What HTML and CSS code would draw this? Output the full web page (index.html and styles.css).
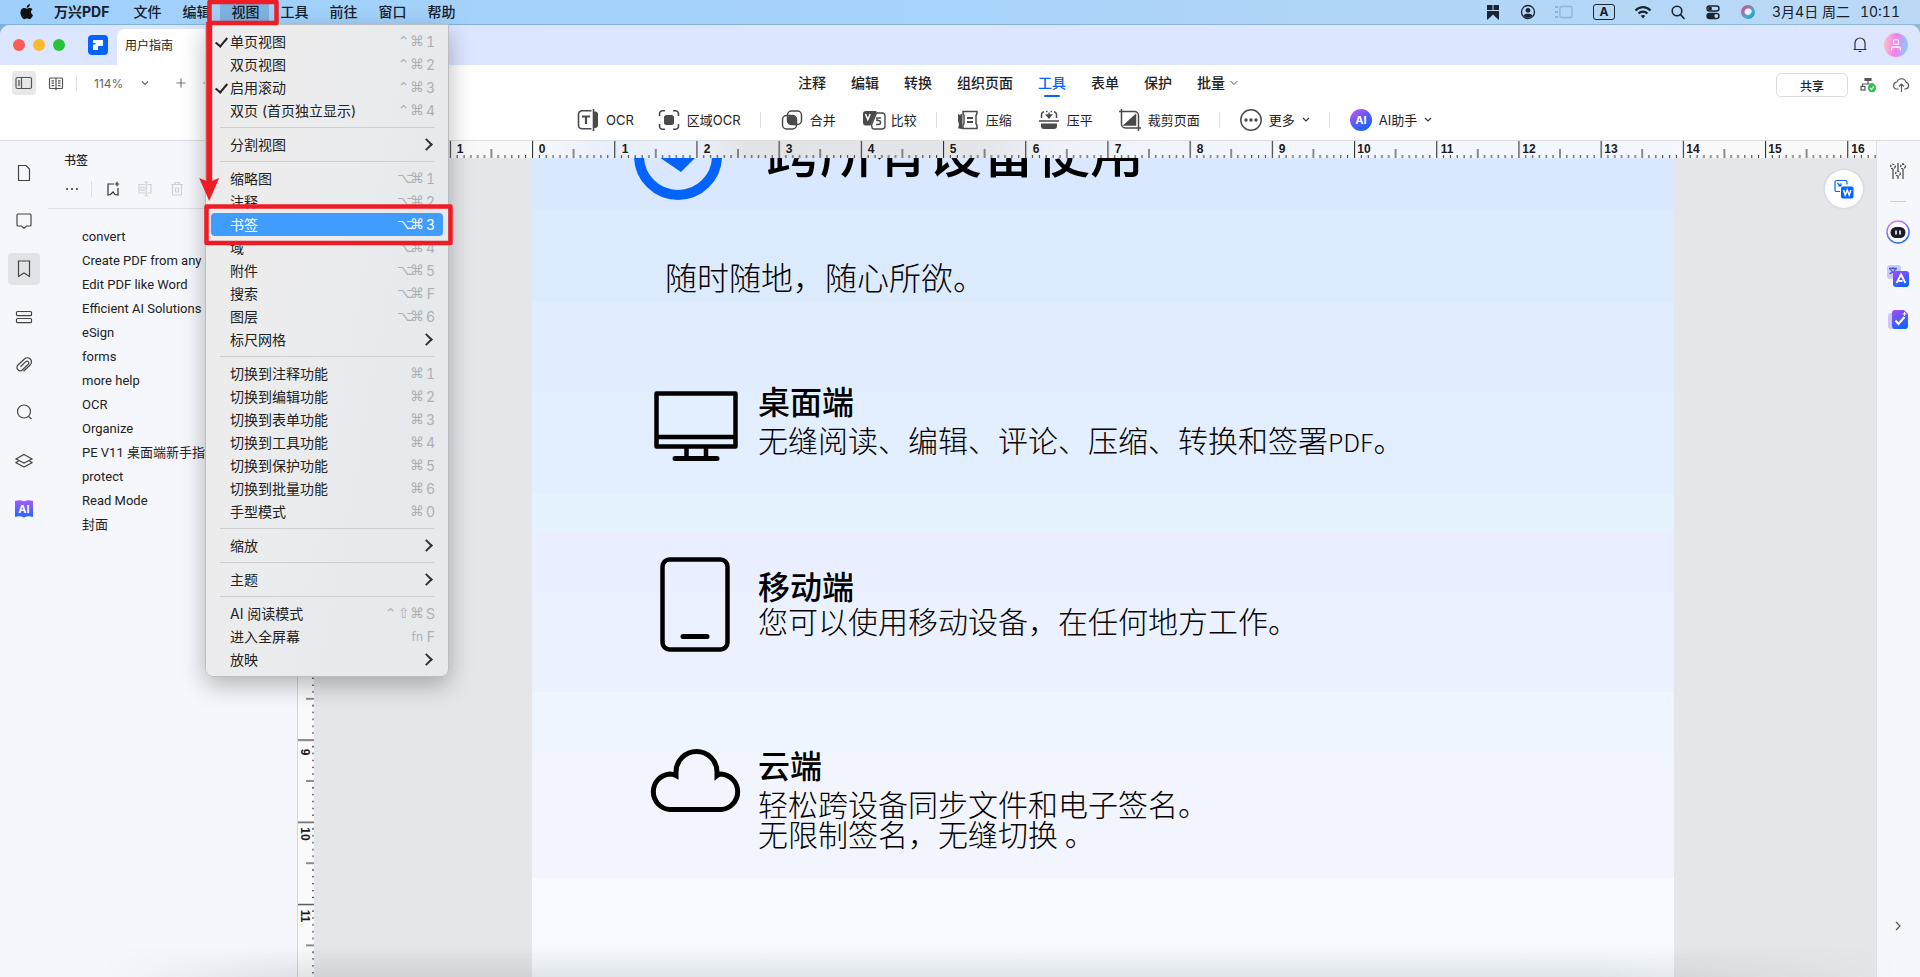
FILE: index.html
```html
<!DOCTYPE html>
<html lang="zh-CN">
<head>
<meta charset="utf-8">
<title>万兴PDF - 用户指南</title>
<link rel="stylesheet" href="styles.css">
</head>
<body>
<header class="menubar">
  <svg class="menubar__apple" width="16" height="18" viewBox="0 0 16 18" fill="#111"><path d="M10.900 1c.1 1-.3 2-.9 2.700-.6.7-1.500 1.200-2.300 1.100-.1-1 .3-1.900.9-2.500C9.200 1.600 10.200 1.100 10.900 1zM13.600 6.300c-1 .6-1.600 1.500-1.600 2.700 0 1.400.8 2.400 2 2.900-.3.900-.7 1.700-1.200 2.400-.7 1-1.300 1.900-2.400 1.900-1 0-1.300-.6-2.500-.6s-1.600.6-2.500.6c-1 0-1.800-1-2.500-2C1.500 12.100.9 9.200 1.900 7.200c.7-1.400 1.900-2.100 3.100-2.100 1.200 0 1.900.6 2.900.6.900 0 1.500-.7 2.900-.7 1.100 0 2.100.5 2.800 1.300z"/></svg>
  <nav class="menubar__items">
    <button class="menubar__item menubar__item--app">万兴PDF</button>
    <button class="menubar__item">文件</button>
    <button class="menubar__item">编辑</button>
    <button class="menubar__item menubar__item--open">视图</button>
    <button class="menubar__item">工具</button>
    <button class="menubar__item">前往</button>
    <button class="menubar__item">窗口</button>
    <button class="menubar__item">帮助</button>
  </nav>
  <div class="menubar__status">
    <svg width="22" height="18" viewBox="0 0 22 18" fill="#1c2430"><path d="M5 2h5.500v5H5zM11.500 2H17v5h-5.500zM5 8h12v9l-3.500-3L11 11.500 8.500 14 5 17z"/></svg>
    <svg width="22" height="18" viewBox="0 0 22 18"><circle cx="11" cy="9" r="6.500" fill="none" stroke="#1c2430" stroke-width="1.300"/><circle cx="11" cy="7.300" r="2.400" fill="#1c2430"/><path d="M6.500 12.500c1.500-2.500 7.500-2.500 9 0-2 3-7 3-9 0z" fill="#1c2430"/></svg>
    <svg width="22" height="18" viewBox="0 0 22 18" fill="none" stroke="#93b2cf" stroke-width="1.300"><rect x="8" y="3.500" width="12" height="11" rx="1.500"/><path d="M3 4h3M3 9h3M3 14h3" stroke-width="2"/></svg>
    <span class="menubar__input">A</span>
    <svg width="22" height="18" viewBox="0 0 22 18" fill="none" stroke="#1c2430" stroke-width="2.200"><path d="M3.500 7.500C8 3 14 3 18.500 7.500M6.500 10.500c2.500-2.500 6.500-2.500 9 0"/><path d="M11 15.500l-2.300-2.800c1.400-1 3.200-1 4.600 0z" fill="#1c2430" stroke="none"/></svg>
    <svg width="22" height="18" viewBox="0 0 22 18" fill="none" stroke="#1c2430" stroke-width="1.600"><circle cx="10" cy="8" r="4.800"/><path d="M13.600 11.600L17 15.500" stroke-linecap="round"/></svg>
    <svg width="22" height="18" viewBox="0 0 22 18"><rect x="5" y="3" width="12" height="5" rx="2.500" fill="none" stroke="#1c2430" stroke-width="1.400"/><circle cx="8" cy="5.500" r="2" fill="#1c2430"/><rect x="4.300" y="9.700" width="13.400" height="6.600" rx="3.300" fill="#1c2430"/><circle cx="14.300" cy="13" r="1.900" fill="#b9d7f4"/></svg>
    <svg width="22" height="18" viewBox="0 0 22 18"><defs><linearGradient id="siri" x1="0" y1="0" x2="1" y2="1"><stop offset="0" stop-color="#e8477d"/><stop offset=".4" stop-color="#8a7fb0"/><stop offset=".65" stop-color="#35b8c8"/><stop offset="1" stop-color="#3a62c9"/></linearGradient></defs><circle cx="11" cy="9" r="7" fill="url(#siri)"/><path d="M11 5.500c3 0 4 2 3.500 3.500S12.500 12 11 12 7.500 11 7.500 9 9 5.500 11 5.500z" fill="#fff" opacity=".85"/></svg>
    <time class="menubar__clock"><span>3月4日 周二</span><span>10:11</span></time>
  </div>
</header>

<div class="window">
  <div class="titlebar">
    <div class="lights"><button class="light light--red" aria-label="关闭"></button><button class="light light--yellow" aria-label="最小化"></button><button class="light light--green" aria-label="全屏"></button></div>
    <svg class="titlebar__logo" width="20" height="20" viewBox="0 0 20 20"><rect width="20" height="20" rx="4" fill="#0463ff"/><path d="M5 5h10v6H10v4H5V9.500h2.500V8H5z" fill="#fff"/></svg>
    <div class="tab">用户指南</div>
    <div class="titlebar__right">
      <svg width="16" height="18" viewBox="0 0 16 18" fill="none" stroke="#333" stroke-width="1.200"><path d="M1.500 13.500h13M3 13.500V7a5 5 0 0 1 10 0v6.500M6.500 15.500h3"/></svg>
      <svg width="24" height="24" viewBox="0 0 24 24"><defs><linearGradient id="av" x1="0" y1=".4" x2="1" y2=".5"><stop offset="0" stop-color="#f9c3c4"/><stop offset=".5" stop-color="#f77cf0"/><stop offset="1" stop-color="#7cd3fb"/></linearGradient></defs><circle cx="12" cy="12" r="12" fill="url(#av)"/><g fill="none" stroke="#fff" stroke-width="1.300" opacity=".9"><rect x="9.500" y="6.500" width="5" height="5" rx="2"/><path d="M7.500 17.500v-1a2.500 2.500 0 0 1 2.500-2.500h4a2.500 2.500 0 0 1 2.500 2.500v1"/></g></svg>
    </div>
  </div>

  <div class="toolbar">
    <div class="toolbar__row">
      <div class="view-tools">
        <button class="view-tools__btn view-tools__btn--on" aria-label="侧边栏"><svg width="18" height="14" viewBox="0 0 18 14" fill="none" stroke="#555" stroke-width="1.200"><rect x="1" y="1.500" width="15.500" height="11" rx="1.500"/><path d="M6.500 1.500v11"/><path d="M3 4h2v6H3z" fill="#888" stroke="none"/></svg></button>
        <button class="view-tools__btn" aria-label="双页"><svg width="16" height="14" viewBox="0 0 16 14" fill="none" stroke="#555" stroke-width="1.200"><path d="M8 2.500v10.500M8 2H2.500a1 1 0 0 0-1 1v8.500a1 1 0 0 0 1 1H7l1 .7 1-.7h4.500a1 1 0 0 0 1-1V3a1 1 0 0 0-1-1zM3.500 4.800h2.500M3.500 7.200h2.500M3.500 9.700h2.500M10 4.800h2.500M10 7.200h2.500M10 9.700h2.500"/></svg></button>
        <span class="rule"></span>
        <span class="zoom">114%</span>
        <svg width="8" height="6" viewBox="0 0 8 6" fill="none" stroke="#666" stroke-width="1.200"><path d="M1 1.500l3 3 3-3"/></svg>
        <button class="zoom-btn" aria-label="放大"><svg width="10" height="10" viewBox="0 0 10 10" stroke="#777" stroke-width="1.200"><path d="M5 .500v9M.500 5h9"/></svg></button>
        <button class="zoom-btn" aria-label="缩小"><svg width="10" height="10" viewBox="0 0 10 10" stroke="#777" stroke-width="1.200"><path d="M.500 5h9"/></svg></button>
      </div>
      <nav class="modes">
        <button class="mode">注释</button><button class="mode">编辑</button><button class="mode">转换</button><button class="mode">组织页面</button><button class="mode mode--on">工具</button><button class="mode">表单</button><button class="mode">保护</button><button class="mode mode--drop">批量<svg width="8" height="6" viewBox="0 0 8 6" fill="none" stroke="#555"><path d="M.500 1l3.500 3.500L7.500 1"/></svg></button>
      </nav>
      <div class="toolbar__right">
        <button class="share">共享</button>
        <svg width="17" height="16" viewBox="0 0 17 16" fill="none" stroke="#555" stroke-width="1.200"><path d="M5 1.500h6v2H5z" fill="#555"/><path d="M8 4v3M2.500 9.500V7h11v1.500"/><rect x="1" y="9.500" width="4" height="3.500"/><circle cx="12" cy="11" r="4.200" fill="#27c24c" stroke="none"/><path d="M10 11l1.500 1.500 2.500-3" stroke="#fff"/></svg>
        <svg width="17" height="16" viewBox="0 0 17 16" fill="none" stroke="#555" stroke-width="1.100"><path d="M5.500 12H4.300a3.500 3.500 0 0 1-.3-7 4.700 4.700 0 0 1 9 .3A3.400 3.400 0 0 1 12.500 12h-1.200M8.500 15V7M6 9.500L8.500 7 11 9.500"/></svg>
      </div>
    </div>
    <div class="toolbar__row toolbar__row--tools">
      <button class="tool tool--ocr"><svg width="22" height="24" viewBox="0 0 22 24" fill="none" stroke="#4a4a4a" stroke-width="1.600"><path d="M14.500 2.800H5a3.500 3.500 0 0 0-3.500 3.500v11A3.500 3.500 0 0 0 5 20.800h9.500"/><path d="M16.500 1v22"/><path d="M16.500 3.500h1.500a3 3 0 0 1 3 3V17a3 3 0 0 1-3 3h-1.500z" fill="#4a4a4a" stroke="none"/><path d="M5 8.500h8M9 8.500v7.500" stroke-width="2.200"/></svg>OCR</button>
      <button class="tool"><svg width="22" height="22" viewBox="0 0 22 22" fill="none" stroke="#4a4a4a" stroke-width="1.600"><path d="M7 1.800H4.500A3 3 0 0 0 1.500 5v2M15 1.800h2.500a3 3 0 0 1 3 3.200v2M7 20.200H4.500a3 3 0 0 1-3-3.200v-2M15 20.200h2.500a3 3 0 0 0 3-3.200v-2"/><rect x="6" y="6" width="10" height="10" rx="2.500" fill="#4a4a4a" stroke="none"/></svg>区域OCR</button>
      <span class="rule"></span>
      <button class="tool"><svg width="22" height="22" viewBox="0 0 22 22" fill="none" stroke="#4a4a4a" stroke-width="1.500"><rect x="6.500" y="2" width="14" height="13.500" rx="4"/><rect x="1.500" y="6.500" width="14" height="13.500" rx="4"/><rect x="6.800" y="6.800" width="8.600" height="8.600" rx="2.500" fill="#4a4a4a" stroke="none"/></svg>合并</button>
      <button class="tool tool--wide"><svg width="24" height="20" viewBox="0 0 24 20"><path d="M4 1h9.500a1 1 0 0 1 .9 1.400L8.500 15.500H4a3 3 0 0 1-3-3V4a3 3 0 0 1 3-3z" fill="#4a4a4a"/><path d="M3.500 4l2.300 5.500L8.200 4" fill="none" stroke="#fff" stroke-width="1.500"/><path d="M14.500 3H20a3 3 0 0 1 3 3v10a3 3 0 0 1-3 3h-8a2 2 0 0 1-2-2l-.5-2z" fill="#fff" stroke="#4a4a4a" stroke-width="1.400"/><path d="M19 8h-4v2.500h1.500a2 2 0 0 1 0 4H14" fill="none" stroke="#4a4a4a" stroke-width="1.500"/></svg>比较</button>
      <span class="rule"></span>
      <button class="tool"><svg width="22" height="20" viewBox="0 0 22 20" fill="none" stroke="#4a4a4a" stroke-width="1.500"><path d="M6 1.500h14v2l-1 2v8l1 2v3H6v-3l1-2v-8l-1-2z"/><path d="M1 4l3 1.500v13H1l1-4-1-4z" fill="#4a4a4a" stroke="none"/><path d="M4.500 4v15" stroke-width="2"/><path d="M10 8h6M10 12h6" stroke-width="2.200"/></svg>压缩</button>
      <button class="tool"><svg width="22" height="20" viewBox="0 0 22 20" fill="none" stroke="#4a4a4a" stroke-width="1.500"><path d="M3.500 8V4.500A3 3 0 0 1 6 1.700M18.500 8V4.500A3 3 0 0 0 16 1.700M8 1.500h1.500M12.500 1.500H14M1 11h20"/><path d="M11 2.500V7M8.500 5l2.500 3 2.500-3z" fill="#4a4a4a" stroke-width="1.300"/><path d="M3 13.500h16V16a3 3 0 0 1-3 3H6a3 3 0 0 1-3-3z" fill="#4a4a4a" stroke="none"/></svg>压平</button>
      <button class="tool"><svg width="22" height="22" viewBox="0 0 22 22" fill="none" stroke="#4a4a4a" stroke-width="1.500"><path d="M2.500 0v15a4 4 0 0 0 4 4H22M0 2.500h15.500a4 4 0 0 1 4 4V22"/><path d="M16.500 6v10h-11z" fill="#4a4a4a"/></svg>裁剪页面</button>
      <span class="rule"></span>
      <button class="tool"><svg width="22" height="22" viewBox="0 0 22 22"><circle cx="11" cy="11" r="10.200" fill="none" stroke="#4a4a4a" stroke-width="1.500"/><g fill="#4a4a4a"><circle cx="6" cy="11" r="1.700"/><circle cx="11" cy="11" r="1.700"/><circle cx="16" cy="11" r="1.700"/></g></svg>更多<svg width="8" height="6" viewBox="0 0 8 6" fill="none" stroke="#333" stroke-width="1.200"><path d="M1 1l3 3 3-3"/></svg></button>
      <span class="rule"></span>
      <button class="tool"><svg width="22" height="22" viewBox="0 0 22 22"><defs><linearGradient id="ai" x1=".1" y1="0" x2=".8" y2="1"><stop offset="0" stop-color="#c458f5"/><stop offset=".5" stop-color="#5a5bf8"/><stop offset="1" stop-color="#0867ff"/></linearGradient></defs><circle cx="11" cy="11" r="11" fill="url(#ai)"/><text x="11" y="15" text-anchor="middle" class="ai-text">AI</text></svg>AI助手<svg width="8" height="6" viewBox="0 0 8 6" fill="none" stroke="#333" stroke-width="1.200"><path d="M1 1l3 3 3-3"/></svg></button>
    </div>
  </div>

  <div class="main">
    <nav class="rail">
      <button class="rail__btn" aria-label="页面"><svg width="20" height="20" viewBox="0 0 20 20"><path d="M4.500 2.500h7.500l3.500 3.500v11.500h-11z"/></svg></button>
      <button class="rail__btn" aria-label="注释"><svg width="20" height="20" viewBox="0 0 20 20"><path d="M4 3h12a1 1 0 0 1 1 1v10a1 1 0 0 1-1 1h-3.500L10 17.200 7.500 15H4a1 1 0 0 1-1-1V4a1 1 0 0 1 1-1z"/></svg></button>
      <button class="rail__btn rail__btn--on" aria-label="书签"><svg width="20" height="20" viewBox="0 0 20 20"><path d="M4.500 2h11v15.500L10 14l-5.500 3.500z"/></svg></button>
      <button class="rail__btn" aria-label="域"><svg width="20" height="20" viewBox="0 0 20 20"><rect x="2.500" y="4.500" width="15" height="4.200" rx="1"/><rect x="2.500" y="11.500" width="15" height="4.200" rx="1"/></svg></button>
      <button class="rail__btn" aria-label="附件"><svg width="20" height="20" viewBox="0 0 20 20"><path d="M9.500 16.200l6.600-6.200a4.200 4.200 0 0 0 .2-6 4.200 4.200 0 0 0-5.900 0L4 10a3.200 3.200 0 0 0 0 4.800 3.200 3.200 0 0 0 4.500 0l5.800-5.600a1.800 1.800 0 0 0-2.600-2.500L6.500 11.800"/></svg></button>
      <button class="rail__btn" aria-label="搜索"><svg width="20" height="20" viewBox="0 0 20 20"><circle cx="10" cy="8.500" r="6.500"/><path d="M14.500 13.500l3 2.500"/></svg></button>
      <button class="rail__btn" aria-label="图层"><svg width="20" height="20" viewBox="0 0 20 20"><path d="M10 3.500l8 4.500-8 4-8-4z"/><path d="M4.500 10L2 11.700l8 4.300 8-4.300-2.500-1.700"/></svg></button>
      <button class="rail__btn" aria-label="AI"><svg width="20" height="20" viewBox="0 0 20 20"><defs><linearGradient id="book" x1="0" y1="0" x2="0" y2="1"><stop offset="0" stop-color="#a95cf8"/><stop offset="1" stop-color="#1c68ff"/></linearGradient></defs><path d="M1 2c3-1.200 6-1.200 9 .3C13 .800 16 .800 19 2v16c-3-1-6-1-9 .5C7 17 4 17 1 18z" fill="url(#book)" stroke="none"/><text x="10" y="14" text-anchor="middle" class="book-text">AI</text></svg></button>
    </nav>

    <aside class="panel">
      <h2 class="panel__title">书签</h2>
      <div class="panel__tools">
        <svg width="14" height="16" viewBox="0 0 14 16" fill="#333"><circle cx="2" cy="8" r="1"/><circle cx="7" cy="8" r="1"/><circle cx="12" cy="8" r="1"/></svg>
        <span class="rule"></span>
        <svg width="16" height="16" viewBox="0 0 16 16" fill="none" stroke="#333" stroke-width="1.200"><path d="M9 3H3v11l2.500-.5L8 11l2 2.500 3 .5V7M12 .800v4.400M9.800 3h4.400"/></svg>
        <svg width="16" height="16" viewBox="0 0 16 16" fill="none" stroke="#cfd0d4" stroke-width="1.200"><path d="M8 3.500H2v8.500h6M10.500 3.500H14v8.500h-3.500M9.200 1v14M7.500 1h3.500M7.500 15h3.500M4 6h3v3.500H4z"/></svg>
        <svg width="16" height="16" viewBox="0 0 16 16" fill="none" stroke="#cfd0d4" stroke-width="1.200"><path d="M2 3.500h12M6 3.500V1.500h4v2M3.500 3.500V14h9V3.500M6.500 7v4h3V7z"/></svg>
      </div>
      <ul class="bookmarks">
        <li><a href="#">convert</a></li><li><a href="#">Create PDF from any format</a></li><li><a href="#">Edit PDF like Word</a></li><li><a href="#">Efficient AI Solutions</a></li><li><a href="#">eSign</a></li><li><a href="#">forms</a></li><li><a href="#">more help</a></li><li><a href="#">OCR</a></li><li><a href="#">Organize</a></li><li><a href="#">PE V11 桌面端新手指南</a></li><li><a href="#">protect</a></li><li><a href="#">Read Mode</a></li><li><a href="#">封面</a></li>
      </ul>
    </aside>

    <div class="workspace">
      <svg class="hruler" height="17">
        <defs>
          <pattern id="hticks" x="152.800" y="0" width="82.200" height="17" patternUnits="userSpaceOnUse">
            <path d="M.500 0v17" stroke="#333" stroke-width="1.200"/>
            <path d="M41.600 8v9" stroke="#333" stroke-width="1.100"/>
            <path d="M7.300 14v3M14.200 14v3M21 14v3M27.900 14v3M34.700 14v3M48.400 14v3M55.300 14v3M62.100 14v3M69 14v3M75.800 14v3" stroke="#333"/>
          </pattern>
        </defs>
        <rect width="100%" height="17" fill="url(#hticks)"/>
        <g class="ruler-num" text-anchor="middle">
          <text x="163" y="12">1</text><text x="245" y="12">0</text><text x="328" y="12">1</text><text x="410" y="12">2</text><text x="492" y="12">3</text><text x="574" y="12">4</text><text x="656" y="12">5</text><text x="739" y="12">6</text><text x="821" y="12">7</text><text x="903" y="12">8</text><text x="985" y="12">9</text><text x="1067" y="12">10</text><text x="1150" y="12">11</text><text x="1232" y="12">12</text><text x="1314" y="12">13</text><text x="1396" y="12">14</text><text x="1478" y="12">15</text><text x="1561" y="12">16</text>
        </g>
      </svg>
      <div class="stage">
        <svg class="vruler" width="17">
          <defs>
            <pattern id="vticks" x="0" y="6" width="17" height="82.200" patternUnits="userSpaceOnUse">
              <path d="M0 .700h17" stroke="#333" stroke-width="1.200"/>
              <path d="M8 41.600h9" stroke="#333" stroke-width="1.100"/>
              <path d="M14 7.300h3M14 14.200h3M14 21h3M14 27.900h3M14 34.700h3M14 48.400h3M14 55.300h3M14 62.100h3M14 69h3M14 75.800h3" stroke="#333"/>
            </pattern>
          </defs>
          <rect width="17" height="100%" fill="url(#vticks)"/>
          <g class="ruler-num" text-anchor="middle">
            <text transform="translate(3 594) rotate(90)">9</text><text transform="translate(3 676) rotate(90)">10</text><text transform="translate(3 758) rotate(90)">11</text>
          </g>
        </svg>
        <div class="canvas">
          <article class="page">
            <div class="page__head">
              <svg width="88" height="88" viewBox="0 0 88 88"><circle cx="44" cy="44" r="39" fill="none" stroke="#0463ff" stroke-width="10"/><path d="M47 60L22 43V30h45v10z" fill="#0463ff"/></svg>
              <h1>跨所有设备使用</h1>
            </div>
            <p class="slogan">随时随地，随心所欲。</p>
            <section class="feature">
              <svg width="93" height="95" viewBox="0 0 93 95" fill="none" stroke="#000" stroke-width="4.500" stroke-linejoin="round"><rect x="7.500" y="14.500" width="79" height="53"/><path d="M7.500 58h79M37.500 68v11M57 68v11"/><path d="M26 79.500h42" stroke-linecap="round" stroke-width="5"/></svg>
              <div class="feature__text"><h2>桌面端</h2><p>无缝阅读、编辑、评论、压缩、转换和签署<span class="latin">PDF</span>。</p></div>
            </section>
            <section class="feature feature--mobile">
              <svg width="93" height="95" viewBox="0 0 93 95" fill="none" stroke="#000" stroke-width="4.500"><rect x="13.500" y="2.500" width="65" height="90" rx="7"/><path d="M34 79.500h24" stroke-linecap="round" stroke-width="5"/></svg>
              <div class="feature__text"><h2>移动端</h2><p>您可以使用移动设备，在任何地方工作。</p></div>
            </section>
            <section class="feature feature--cloud">
              <svg width="93" height="95" viewBox="0 0 93 95" fill="none" stroke="#000" stroke-width="5"><path d="M20.800 66.500a17.800 17.800 0 0 1 0-35.500q3 0 6.200 1.600V29a20.500 20.500 0 0 1 41 0v3.600q2-1.600 4.200-1.600a17.800 17.800 0 0 1 0 35.500z"/></svg>
              <div class="feature__text"><h2>云端</h2><p>轻松跨设备同步文件和电子签名。<br>无限制签名，无缝切换 。</p></div>
            </section>
          </article>
          <button class="to-word" aria-label="转为 Word"><svg width="20" height="20" viewBox="0 0 20 20"><path d="M6 12.500H2.500a1.500 1.500 0 0 1-1.500-1.500V3a1.500 1.500 0 0 1 1.500-1.500h9A1.500 1.500 0 0 1 13 3v2.500" fill="none" stroke="#0463ff" stroke-width="1.200"/><path d="M3.500 4l3 3M7 4.200V7H4.200" fill="none" stroke="#0463ff" stroke-width="1.200"/><rect x="7" y="7.500" width="12.500" height="12" rx="2" fill="#0463ff"/><path d="M9.500 11l1.700 5 2-5 2 5 1.700-5" fill="none" stroke="#fff" stroke-width="1.500"/></svg></button>
        </div>
      </div>
    </div>

    <aside class="right-rail">
      <svg width="20" height="20" viewBox="0 0 20 20" fill="none" stroke="#333" stroke-width="1.100"><path d="M5 8v10M10 2v8M10 15v3M15 8v10M15 2v2"/><circle cx="5" cy="5.500" r="2.300" stroke-dasharray="2 1"/><circle cx="10" cy="12.500" r="2.300" stroke-dasharray="2 1"/><circle cx="15" cy="5.500" r="2.300" stroke-dasharray="2 1"/></svg>
      <hr>
      <svg width="24" height="24" viewBox="0 0 24 24"><defs><linearGradient id="bot" x1="0" y1="0" x2=".4" y2="1"><stop offset="0" stop-color="#f27cf0"/><stop offset="1" stop-color="#2468ff"/></linearGradient></defs><circle cx="12" cy="12" r="11" fill="#fff" stroke="url(#bot)" stroke-width="1.500"/><rect x="4.500" y="7" width="15" height="11" rx="5.500" fill="#1b1b2e"/><path d="M10 10.500v4M14 10.500v4" stroke="#fff" stroke-width="1.600"/></svg>
      <svg width="24" height="24" viewBox="0 0 24 24"><defs><linearGradient id="tr" x1=".2" y1="0" x2=".7" y2="1"><stop offset="0" stop-color="#a04df5"/><stop offset="1" stop-color="#0867ff"/></linearGradient></defs><rect x="1" y="1" width="14" height="14" rx="3" fill="#cdc9f7"/><path d="M3 4.500h8M7 3v1.500M9.500 5C8.500 7.500 6 9 3.500 9.500M4.500 5.500C6 8 7.500 9 9 9.500" fill="none" stroke="#3c57e8" stroke-width="1.300"/><rect x="7" y="7" width="16" height="16" rx="3" fill="url(#tr)"/><path d="M10.500 19L15 10.500 19.500 19M12.500 17h4" fill="none" stroke="#fff" stroke-width="1.800"/></svg>
      <svg width="24" height="24" viewBox="0 0 24 24"><rect x="2" y="5" width="14" height="16" rx="3" fill="#cdc9f7"/><path d="M9 2h9l4 4v12a3 3 0 0 1-3 3H9a3 3 0 0 1-3-3V5a3 3 0 0 1 3-3z" fill="url(#tr)"/><path d="M9.500 12.500l3 3.500 6-7" fill="none" stroke="#fff" stroke-width="2"/><path d="M18.500 4v4M16.500 6h4" stroke="#fff"/></svg>
      <svg class="right-rail__more" width="10" height="10" viewBox="0 0 10 10" fill="none" stroke="#555" stroke-width="1.200"><path d="M3 1l4 4-4 4"/></svg>
    </aside>
  </div>
  <div class="dock-shade"></div>
</div>

<div class="menu" role="menu">
  <button class="menu__item menu__item--checked" role="menuitem">单页视图<kbd><i>⌃</i><i>⌘</i><b>1</b></kbd></button>
  <button class="menu__item" role="menuitem">双页视图<kbd><i>⌃</i><i>⌘</i><b>2</b></kbd></button>
  <button class="menu__item menu__item--checked" role="menuitem">启用滚动<kbd><i>⌃</i><i>⌘</i><b>3</b></kbd></button>
  <button class="menu__item" role="menuitem">双页 (首页独立显示)<kbd><i>⌃</i><i>⌘</i><b>4</b></kbd></button>
  <hr>
  <button class="menu__item menu__item--sub" role="menuitem">分割视图</button>
  <hr>
  <button class="menu__item" role="menuitem">缩略图<kbd><i>⌥</i><i>⌘</i><b>1</b></kbd></button>
  <button class="menu__item" role="menuitem">注释<kbd><i>⌥</i><i>⌘</i><b>2</b></kbd></button>
  <button class="menu__item menu__item--on" role="menuitem">书签<kbd><i>⌥</i><i>⌘</i><b>3</b></kbd></button>
  <button class="menu__item" role="menuitem">域<kbd><i>⌥</i><i>⌘</i><b>4</b></kbd></button>
  <button class="menu__item" role="menuitem">附件<kbd><i>⌥</i><i>⌘</i><b>5</b></kbd></button>
  <button class="menu__item" role="menuitem">搜索<kbd><i>⌥</i><i>⌘</i><b>F</b></kbd></button>
  <button class="menu__item" role="menuitem">图层<kbd><i>⌥</i><i>⌘</i><b>6</b></kbd></button>
  <button class="menu__item menu__item--sub" role="menuitem">标尺网格</button>
  <hr>
  <button class="menu__item" role="menuitem">切换到注释功能<kbd><i>⌘</i><b>1</b></kbd></button>
  <button class="menu__item" role="menuitem">切换到编辑功能<kbd><i>⌘</i><b>2</b></kbd></button>
  <button class="menu__item" role="menuitem">切换到表单功能<kbd><i>⌘</i><b>3</b></kbd></button>
  <button class="menu__item" role="menuitem">切换到工具功能<kbd><i>⌘</i><b>4</b></kbd></button>
  <button class="menu__item" role="menuitem">切换到保护功能<kbd><i>⌘</i><b>5</b></kbd></button>
  <button class="menu__item" role="menuitem">切换到批量功能<kbd><i>⌘</i><b>6</b></kbd></button>
  <button class="menu__item" role="menuitem">手型模式<kbd><i>⌘</i><b>0</b></kbd></button>
  <hr>
  <button class="menu__item menu__item--sub" role="menuitem">缩放</button>
  <hr>
  <button class="menu__item menu__item--sub" role="menuitem">主题</button>
  <hr>
  <button class="menu__item" role="menuitem">AI 阅读模式<kbd><i>⌃</i><i>⇧</i><i>⌘</i><b>S</b></kbd></button>
  <button class="menu__item" role="menuitem">进入全屏幕<kbd><small>fn</small><b>F</b></kbd></button>
  <button class="menu__item menu__item--sub" role="menuitem">放映</button>
</div>

<svg class="callout" width="260" height="250" viewBox="0 0 260 250" fill="none" stroke="#ee1c25" stroke-linejoin="round">
  <rect x="16.500" y="2" width="67" height="21" stroke-width="4.500"/>
  <path d="M16.200 22v162" stroke-width="6"/>
  <path d="M16.200 201l-10-23 10 4 10-4z" fill="#ee1c25" stroke="none"/>
  <rect x="13.500" y="206.500" width="244" height="36.500" stroke-width="4.500"/>
</svg>
</body>
</html>
```
FILE: styles.css
```css
* { box-sizing: border-box; }

body {
  margin: 0;
  height: 100vh;
  display: flex;
  flex-direction: column;
  overflow: hidden;
  background: linear-gradient(90deg, #7fb3dd, #8db8d8);
  color: #222;
  font-family: Inter, "Noto Sans CJK SC", sans-serif;
  font-size: 14px;
}

button {
  border: 0;
  padding: 0;
  background: none;
  color: inherit;
  font: inherit;
}

h1, h2, p, ul { margin: 0; padding: 0; }
svg { flex: none; display: block; }

.rule { flex: none; width: 1px; height: 16px; background: #e0e0e2; }

/* System menu bar */
.menubar {
  flex: none;
  height: 24px;
  display: flex;
  align-items: center;
  padding: 0 20px 0 19px;
  background: linear-gradient(90deg, #9fd0fb, #a8d3fa 50%, #bbd9f5);
  color: #16202c;
}
.menubar__items { display: flex; align-items: center; margin-left: 8px; }
.menubar__item { height: 22px; padding: 0 10px 0 11px; line-height: 22px; font-weight: 500; }
.menubar__item--app { padding-right: 13px; font-weight: 700; }
.menubar__item--open { background: #7fb2de; }
.menubar__status { display: flex; align-items: center; gap: 13px; margin-left: auto; }
.menubar__input {
  width: 22px;
  height: 16px;
  margin: 0 4px 0 6px;
  border: 1px solid #1c2430;
  border-radius: 3px;
  font-size: 12px;
  font-weight: 700;
  line-height: 14px;
  text-align: center;
}
.menubar__clock { display: flex; gap: 10px; line-height: 24px; font-variant-numeric: tabular-nums; }

/* Window frame */
.window {
  flex: 1;
  min-height: 0;
  position: relative;
  display: flex;
  flex-direction: column;
  margin-top: 1px;
  border-radius: 10px 10px 0 0;
  overflow: hidden;
  background: #f6f7fc;
}
.titlebar { flex: none; height: 40px; display: flex; align-items: center; padding: 0 12px 0 13px; background: #dde6ff; }
.lights { display: flex; gap: 8px; }
.light { width: 12px; height: 12px; border-radius: 50%; }
.light--red { background: #fb5b54; }
.light--yellow { background: #fcb92c; }
.light--green { background: #25c43c; }
.titlebar__logo { margin-left: 23px; }
.tab {
  align-self: flex-end;
  width: 240px;
  height: 36px;
  margin-left: 9px;
  padding-left: 8px;
  border-radius: 8px 8px 0 0;
  background: #fff;
  font-size: 12px;
  line-height: 34px;
}
.titlebar__right { display: flex; align-items: center; gap: 16px; margin-left: auto; }

/* Toolbar */
.toolbar { flex: none; height: 76px; background: #fff; border-bottom: 1px solid #dcdcde; }
.toolbar__row { display: flex; align-items: center; height: 36px; padding: 0 10px 0 12px; }
.toolbar__row--tools { padding-left: 577px; height: 38px; }
.view-tools { flex: none; display: flex; align-items: center; width: 786px; color: #666; }
.view-tools__btn { width: 24px; height: 24px; border-radius: 4px; display: grid; place-items: center; }
.view-tools__btn--on { background: #e8e8e9; margin-right: 8px; }
.view-tools .rule { margin: 0 17px 0 8px; }
.zoom { width: 47px; font-size: 12px; }
.zoom-btn { margin-left: 27px; width: 10px; }
.zoom-btn + .zoom-btn { margin-left: 17px; }
.modes { display: flex; gap: 25px; }
.mode { height: 28px; line-height: 28px; font-weight: 500; position: relative; }
.mode--drop { display: flex; align-items: center; gap: 5px; }
.mode--on { color: #0463ff; }
.mode--on::after {
  content: "";
  position: absolute;
  left: 6px;
  right: 6px;
  bottom: 0;
  height: 2px;
  border-radius: 1px;
  background: #0463ff;
}
.toolbar__right { display: flex; align-items: center; gap: 16px; margin-left: auto; padding-top: 4px; }
.share {
  width: 72px;
  height: 24px;
  margin-right: -4px;
  border: 1px solid #dcdcde;
  border-radius: 5px;
  font-size: 12px;
  font-weight: 500;
}
.tool { display: flex; align-items: center; gap: 7px; margin-right: 26px; font-size: 13px; line-height: 24px; white-space: nowrap; }
.tool--ocr { margin-right: 24px; }
.tool--wide { gap: 5px; }
.toolbar__row--tools .rule { margin-right: 20px; margin-left: -7px; }
.ai-text { fill: #fff; font-size: 11px; font-weight: 700; }
.book-text { fill: #fff; font-size: 11px; font-weight: 700; }

/* Side panels */
.main { flex: 1; min-height: 0; display: flex; }
.rail { flex: none; width: 48px; display: flex; flex-direction: column; align-items: center; gap: 16px; padding-top: 16px; }
.rail__btn { width: 32px; height: 32px; border-radius: 4px; display: grid; place-items: center; }
.rail__btn svg { fill: none; stroke: #444; stroke-width: 1.2; }
.rail__btn .book-text { fill: #fff; stroke: none; }
.rail__btn--on { background: #e2e3e7; }
.panel { flex: none; width: 249px; font-family: Roboto, "Noto Sans CJK SC", sans-serif; font-size: 13px; overflow: hidden; }
.panel__title { padding: 10px 16px 0; font-size: 12px; line-height: 20px; font-weight: 500; }
.panel__tools { display: flex; align-items: center; gap: 16px; height: 38px; padding: 0 17px 2px; border-bottom: 1px solid #e0e1e6; }
.panel__tools .rule { margin: 0 -3px 0 -4px; }
.bookmarks { list-style: none; padding: 16px 0 0 34px; line-height: 24px; white-space: nowrap; }
.bookmarks a { color: inherit; text-decoration: none; }

/* Document area */
.workspace { flex: 1; min-width: 0; display: flex; flex-direction: column; background: #e5e6ea; }
.hruler {
  width: 100%;
  background: linear-gradient(90deg, #f8f8f9 235px, #e6eefc 320px, #eaf1fd 400px, #e2e3e6 450px, #e4e5e8 680px, #eef1f8 760px, #f2f6fd 1000px, #f3f7fd 1370px, #f9f9fa 1400px);
}
.stage { flex: 1; min-height: 0; display: flex; }
.vruler { height: 100%; background: #fafafa; border-left: 1px solid #d3d7dc; }
.ruler-num { font-family: "Liberation Sans", Arial, sans-serif; font-size: 12px; font-weight: 700; fill: #1a1a1a; }
.canvas { flex: 1; min-width: 0; position: relative; padding: 0 202px 0 218px; overflow: hidden; }
.page {
  min-height: calc(100% + 46px);
  margin-top: -46px;
  padding: 0 0 80px 102px;
  color: #000;
  background: linear-gradient(#dae8ff 98px, #dceafe 98px 190px, #e1ecff 190px 280px, #e3eefe 280px 382px, #e5f2ff 382px 419px, #e9effe 419px 481px, #ebf1ff 481px 580px, #edf5ff 580px 641px, #f3f5fe 641px 766px, #f7fbff 766px);
  font-family: "Noto Sans CJK SC", sans-serif;
}
.page__head { display: flex; gap: 44px; }
.page__head h1 { font-size: 54px; line-height: 76px; font-weight: 500; }
.slogan { margin: 56px 0 83px 31px; font-size: 32px; line-height: 40px; font-weight: 300; }
.feature { display: flex; gap: 16px; margin: 0 0 83px 15px; height: 95px; }
.feature__text { padding-top: 1px; }
.feature h2 { font-size: 32px; line-height: 40px; font-weight: 500; }
.feature p { margin-top: 4px; font-size: 30px; line-height: 30px; font-weight: 300; white-space: nowrap; }
.feature .latin { font-size: 25px; }
.feature--mobile { margin-bottom: 91px; }
.feature--mobile .feature__text { padding-top: 8px; }
.feature--mobile p { margin-top: 0; }
.feature--cloud { margin-bottom: 0; }
.to-word {
  position: absolute;
  top: 12px;
  right: 13px;
  width: 38px;
  height: 38px;
  border-radius: 50%;
  background: #fff;
  box-shadow: 0 0 3px rgba(0, 0, 0, .15);
  display: grid;
  place-items: center;
}
.right-rail { flex: none; width: 44px; display: flex; flex-direction: column; align-items: center; padding: 20px 2px 0 0; border-left: 1px solid #dfe0e4; }
.right-rail hr { width: 16px; height: 1px; margin: 20px 0 18px; border: 0; background: #cfd0d5; }
.right-rail svg + svg { margin-top: 20px; }
.right-rail svg.right-rail__more { margin-top: auto; margin-bottom: 46px; }
.dock-shade {
  position: absolute;
  left: 0;
  right: 0;
  bottom: 0;
  height: 32px;
  pointer-events: none;
  background: linear-gradient(rgba(0, 0, 0, 0), rgba(30, 40, 40, .1));
  mask-image: linear-gradient(90deg, transparent 100px, #000 300px, #000 1600px, transparent 1900px);
}

/* View menu */
.menu {
  position: absolute;
  left: 205px;
  top: 24px;
  width: 244px;
  padding: 5px;
  border: 1px solid #bcbdc0;
  border-radius: 0 0 8px 8px;
  background: linear-gradient(100deg, #ececed 30%, #e6eaed 75%);
  box-shadow: 0 8px 24px rgba(0, 0, 0, .28);
}
.menu hr { height: 1px; margin: 5px 9px; border: 0; background: #cdced1; }
.menu__item {
  position: relative;
  display: flex;
  align-items: center;
  width: 100%;
  height: 23px;
  padding: 0 8px 0 19px;
  border-radius: 4px;
  line-height: 23px;
}
.menu__item kbd { display: flex; align-items: center; margin-left: auto; font: inherit; color: #adb0b3; }
.menu__item i { width: 13px; text-align: center; font: 14px/23px "DejaVu Sans", sans-serif; }
.menu__item b { width: 12px; text-align: right; font-weight: 400; font-variant-numeric: tabular-nums; }
.menu__item small { font-size: 12px; }
.menu__item--on { background: #419cff; color: #fff; }
.menu__item--on kbd { color: #fff; }
.menu__item--checked::before {
  content: "";
  position: absolute;
  left: 7px;
  top: 5px;
  width: 5px;
  height: 10px;
  border: solid #222;
  border-width: 0 2px 2px 0;
  transform: rotate(40deg);
}
.menu__item--sub::after {
  content: "";
  width: 7px;
  height: 7px;
  margin: 0 4px 0 auto;
  border: solid #333;
  border-width: 2px 2px 0 0;
  transform: rotate(45deg);
}

.callout { position: absolute; left: 193px; top: 0; pointer-events: none; }
```
